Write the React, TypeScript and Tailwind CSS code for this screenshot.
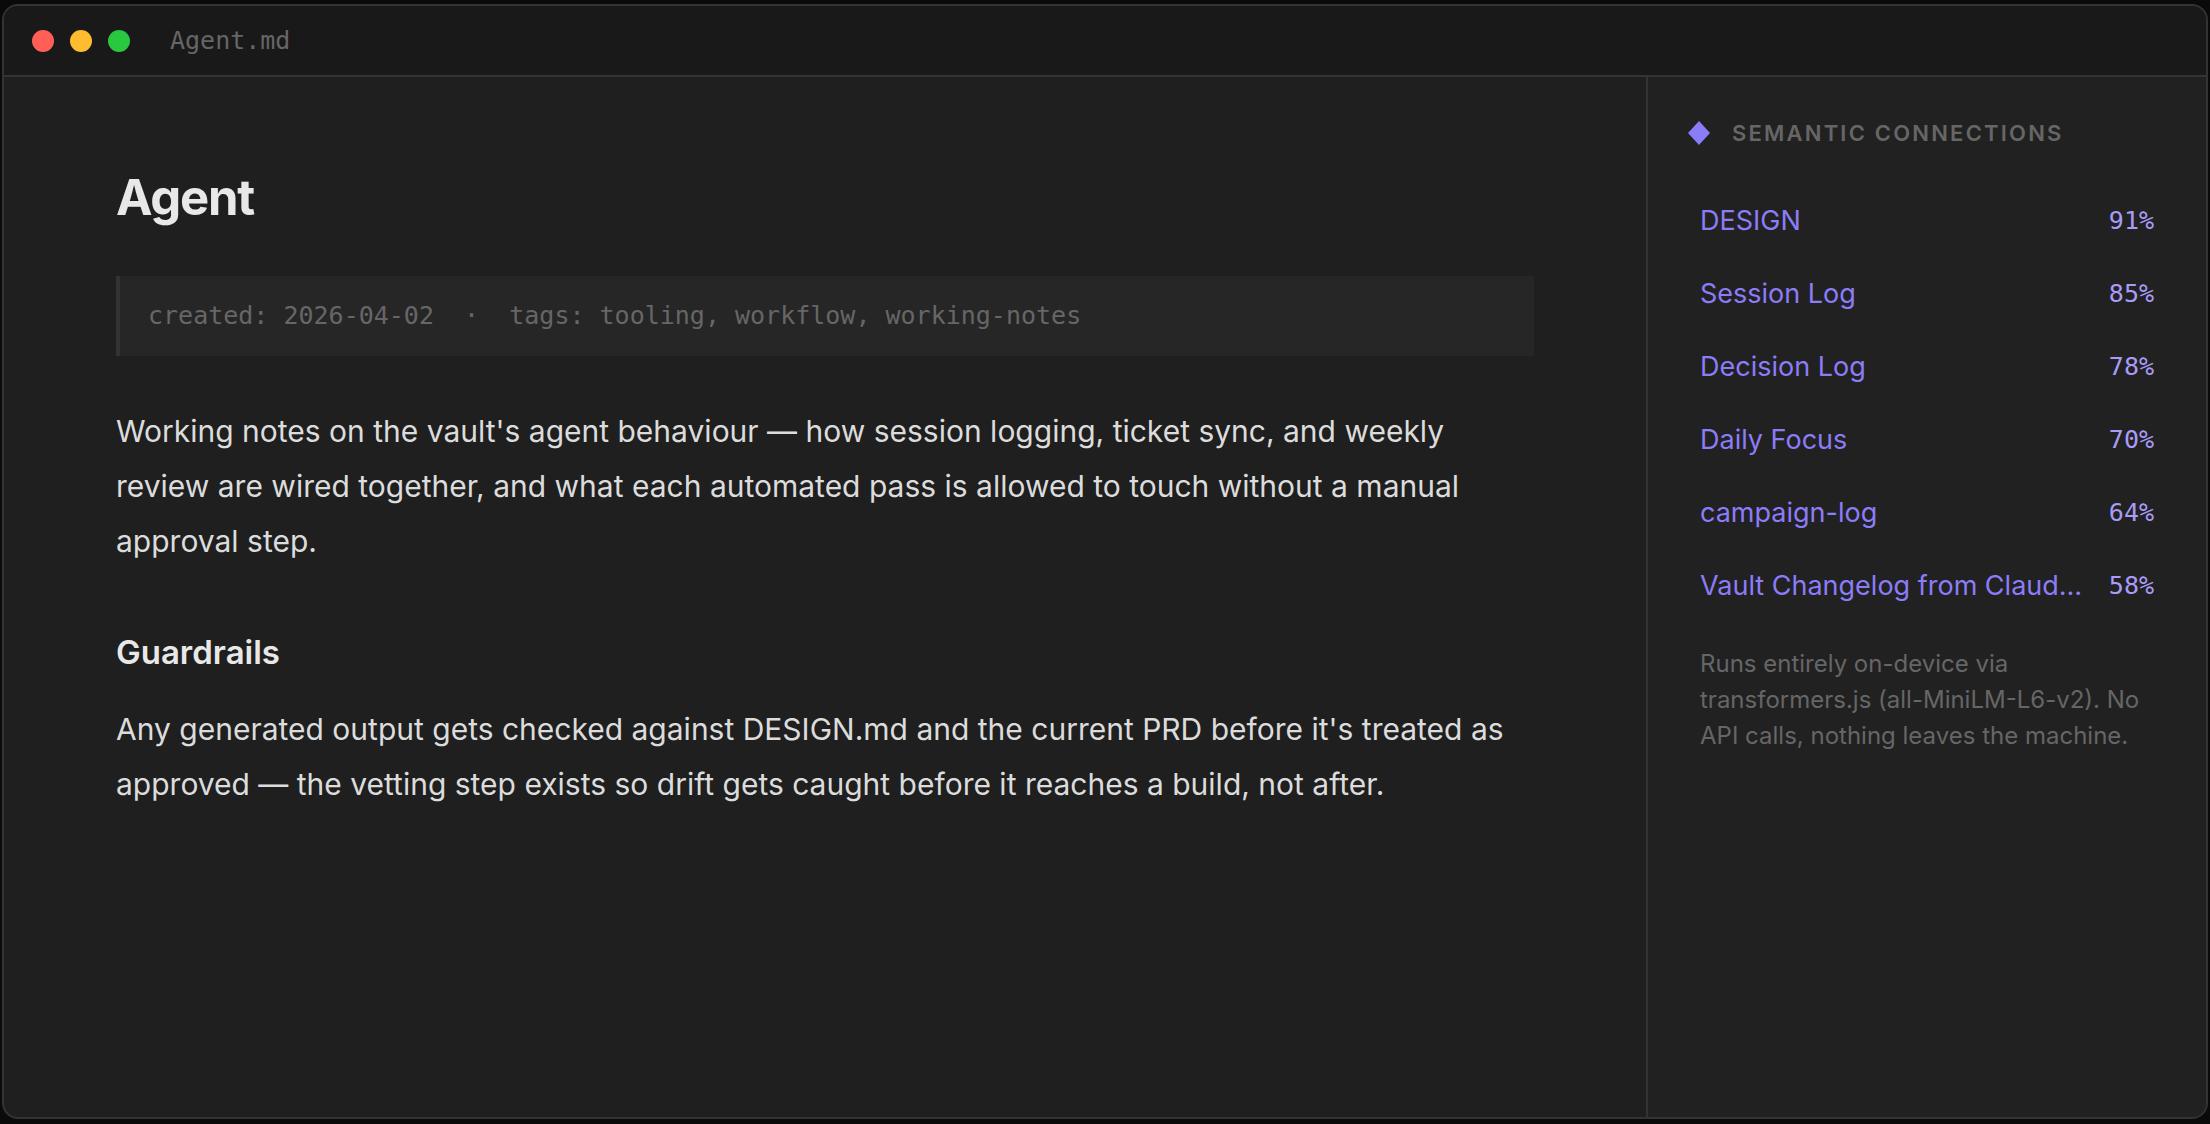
type Connection = { name: string; score: number };

const connections: Connection[] = [
  { name: "DESIGN", score: 91 },
  { name: "Session Log", score: 85 },
  { name: "Decision Log", score: 78 },
  { name: "Daily Focus", score: 70 },
  { name: "campaign-log", score: 64 },
  { name: "Vault Changelog from Claud…", score: 58 },
];

function TitleBar() {
  return (
    <header className="flex h-[71px] shrink-0 items-center border-b-2 border-[#333333] bg-[#191919] px-7">
      <div className="flex gap-4">
        <button type="button" aria-label="Close" className="size-[22px] rounded-full bg-[#ff5f57]" />
        <button type="button" aria-label="Minimize" className="size-[22px] rounded-full bg-[#febc2e]" />
        <button type="button" aria-label="Zoom" className="size-[22px] rounded-full bg-[#28c840]" />
      </div>
      <span className="ml-10 font-['DejaVu_Sans_Mono',monospace] text-[25px] leading-8 text-[#666666]">
        Agent.md
      </span>
    </header>
  );
}

function Note() {
  return (
    <main className="min-w-0 flex-1 px-28 pt-[88px] pb-20 text-[30px] leading-[55px] text-[#dcdcdc]">
      <h1 className="text-[49px] leading-[66px] font-bold tracking-tight text-[#e8e8e8]">Agent</h1>
      <p className="mt-[45px] border-l-4 border-[#333333] bg-[#262626] px-7 py-5 font-['DejaVu_Sans_Mono',monospace] text-[25px] leading-10 text-[#666666]">
        created: 2026-04-02&nbsp; ·&nbsp; tags: tooling, workflow, working-notes
      </p>
      <p className="mt-12">
        Working notes on the vault's agent behaviour — how session logging, ticket sync, and weekly
        review are wired together, and what each automated pass is allowed to touch without a manual
        approval step.
      </p>
      <h2 className="mt-14 text-[33px] font-semibold text-[#e8e8e8]">Guardrails</h2>
      <p className="mt-[22px]">
        Any generated output gets checked against DESIGN.md and the current PRD before it's treated as
        approved — the vetting step exists so drift gets caught before it reaches a build, not after.
      </p>
    </main>
  );
}

function Sidebar() {
  return (
    <aside className="w-[560px] shrink-0 border-l-2 border-[#333333] bg-[#212121] px-10 pt-9">
      <h2 className="flex items-center gap-[22px] text-[22px] leading-10 font-semibold tracking-widest text-[#666666]">
        <svg viewBox="0 0 22 24" className="h-6 w-[22px] fill-[#8b7cf8]" aria-hidden="true">
          <path d="M11 0 22 12 11 24 0 12Z" />
        </svg>
        SEMANTIC CONNECTIONS
      </h2>
      <ul className="mt-[31px]">
        {connections.map((item) => (
          <li key={item.name}>
            <a href="#" className="flex h-[73px] items-center justify-between gap-5 px-3">
              <span className="truncate text-[27px] leading-10 text-[#8b7cf8]">{item.name}</span>
              <span className="font-['DejaVu_Sans_Mono',monospace] text-[25px] leading-10 text-[#a99bf8]">
                {item.score}%
              </span>
            </a>
          </li>
        ))}
      </ul>
      <p className="mt-6 px-3 text-[24px] leading-9 text-[#666666]">
        Runs entirely on-device via transformers.js (all-MiniLM-L6-v2). No API calls, nothing leaves
        the machine.
      </p>
    </aside>
  );
}

export default function App() {
  return (
    <div className="flex min-h-screen flex-col bg-[#0a0a0b] px-0.5 pt-1 pb-[5px] font-[Inter,sans-serif]">
      <div className="flex flex-1 flex-col overflow-hidden rounded-2xl border-2 border-[#333333] bg-[#1f1f1f]">
        <TitleBar />
        <div className="flex flex-1">
          <Note />
          <Sidebar />
        </div>
      </div>
    </div>
  );
}
